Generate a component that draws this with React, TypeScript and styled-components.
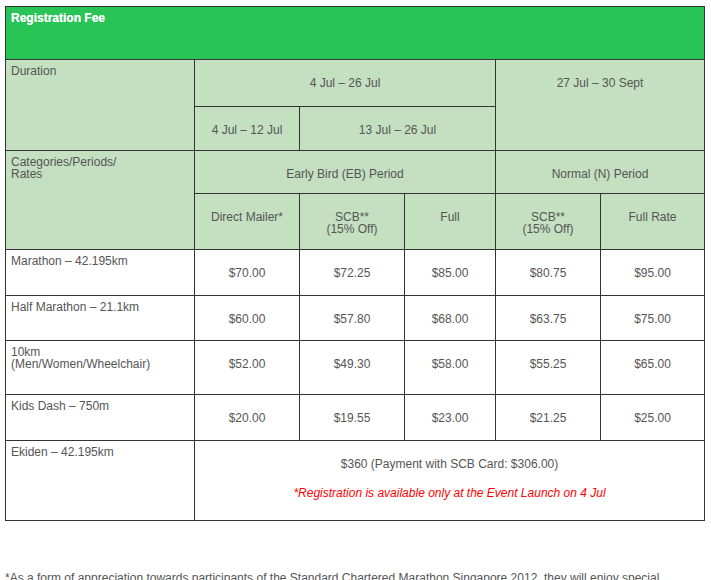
import styled, { createGlobalStyle } from "styled-components";

const GlobalStyle = createGlobalStyle`
  html, body {
    margin: 0;
    padding: 0;
    background: #ffffff;
  }
  body {
    font-family: "Liberation Sans", Arial, Helvetica, sans-serif;
    font-size: 12px;
    color: #555555;
  }
`;

const Page = styled.div`
  padding: 6px 0 0 5px;
  width: 700px;
`;

const FeeTable = styled.table`
  width: 699px;
  border-collapse: collapse;
  table-layout: fixed;
  line-height: 12px;
`;

const Row = styled.tr<{ $h: number }>`
  height: ${({ $h }) => $h}px;
`;

const TitleCell = styled.td`
  background: #28c455;
  color: #ffffff;
  font-weight: bold;
  border: 1px solid #333333;
  padding: 5px 5px;
  vertical-align: top;
  text-shadow: 0 0 0.4px #ffffff;
`;

const LabelCell = styled.td<{ $head?: boolean }>`
  background: ${({ $head }) => ($head ? "#c4e0c0" : "#ffffff")};
  border: 1px solid #333333;
  padding: 5px 5px;
  vertical-align: top;
  text-align: left;
`;

const ValueCell = styled.td<{ $head?: boolean }>`
  background: ${({ $head }) => ($head ? "#c4e0c0" : "#ffffff")};
  border: 1px solid #333333;
  padding: 17px 4px 4px;
  vertical-align: top;
  text-align: center;
`;

const Note = styled.div`
  margin-top: 17px;
  color: #ff0000;
  font-style: italic;
`;

const Footnote = styled.p`
  margin: 50px 0 0;
  max-width: 672px;
  line-height: 14px;
`;

const prices = [
  { label: ["Marathon – 42.195km"], h: 46, v: ["$70.00", "$72.25", "$85.00", "$80.75", "$95.00"] },
  { label: ["Half Marathon – 21.1km"], h: 45, v: ["$60.00", "$57.80", "$68.00", "$63.75", "$75.00"] },
  { label: ["10km", "(Men/Women/Wheelchair)"], h: 54, v: ["$52.00", "$49.30", "$58.00", "$55.25", "$65.00"] },
  { label: ["Kids Dash – 750m"], h: 46, v: ["$20.00", "$19.55", "$23.00", "$21.25", "$25.00"] },
];

function Lines({ lines }: { lines: string[] }) {
  return (
    <>
      {lines.map((l, i) => (
        <span key={i}>
          {i > 0 && <br />}
          {l}
        </span>
      ))}
    </>
  );
}

export default function App() {
  return (
    <>
      <GlobalStyle />
      <Page>
        <FeeTable>
          <colgroup>
            <col style={{ width: 189 }} />
            <col style={{ width: 105 }} />
            <col style={{ width: 105 }} />
            <col style={{ width: 91 }} />
            <col style={{ width: 105 }} />
            <col style={{ width: 104 }} />
          </colgroup>
          <tbody>
            <Row $h={53}>
              <TitleCell colSpan={6}>Registration Fee</TitleCell>
            </Row>
            <Row $h={47}>
              <LabelCell $head rowSpan={2}>Duration</LabelCell>
              <ValueCell $head colSpan={3}>4 Jul – 26 Jul</ValueCell>
              <ValueCell $head colSpan={2} rowSpan={2}>27 Jul – 30 Sept</ValueCell>
            </Row>
            <Row $h={44}>
              <ValueCell $head>4 Jul – 12 Jul</ValueCell>
              <ValueCell $head colSpan={2}>13 Jul – 26 Jul</ValueCell>
            </Row>
            <Row $h={43}>
              <LabelCell $head rowSpan={2}>
                <Lines lines={["Categories/Periods/", "Rates"]} />
              </LabelCell>
              <ValueCell $head colSpan={3}>Early Bird (EB) Period</ValueCell>
              <ValueCell $head colSpan={2}>Normal (N) Period</ValueCell>
            </Row>
            <Row $h={56}>
              <ValueCell $head>Direct Mailer*</ValueCell>
              <ValueCell $head>
                <Lines lines={["SCB**", "(15% Off)"]} />
              </ValueCell>
              <ValueCell $head>Full</ValueCell>
              <ValueCell $head>
                <Lines lines={["SCB**", "(15% Off)"]} />
              </ValueCell>
              <ValueCell $head>Full Rate</ValueCell>
            </Row>
            {prices.map((p) => (
              <Row $h={p.h} key={p.label[0]}>
                <LabelCell>
                  <Lines lines={p.label} />
                </LabelCell>
                {p.v.map((v, i) => (
                  <ValueCell key={i}>{v}</ValueCell>
                ))}
              </Row>
            ))}
            <Row $h={80}>
              <LabelCell>Ekiden – 42.195km</LabelCell>
              <ValueCell colSpan={5}>
                $360 (Payment with SCB Card: $306.00)
                <Note>*Registration is available only at the Event Launch on 4 Jul</Note>
              </ValueCell>
            </Row>
          </tbody>
        </FeeTable>
        <Footnote>
          *As a form of appreciation towards participants of the Standard Chartered Marathon Singapore 2012, they will enjoy special
          rates for the Direct Mailer period.
        </Footnote>
      </Page>
    </>
  );
}
